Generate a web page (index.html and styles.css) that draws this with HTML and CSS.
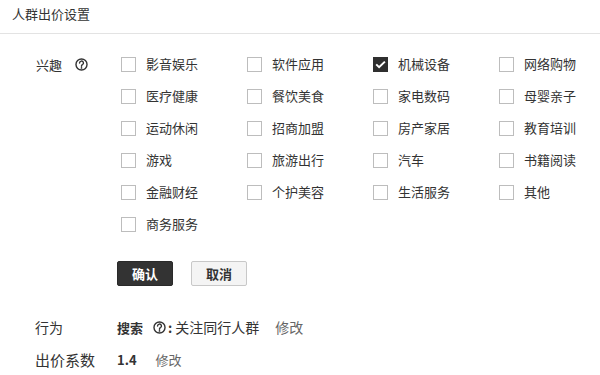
FILE: index.html
```html
<!DOCTYPE html>
<html lang="zh-CN">
<head>
<meta charset="utf-8">
<title>人群出价设置</title>
<link rel="stylesheet" href="styles.css">
</head>
<body>
<div class="header">人群出价设置</div>

<div class="interest">
  <div class="label">兴趣 <svg class="help" viewBox="0 0 12 12"><circle cx="6" cy="6" r="5.1" fill="none" stroke="#333" stroke-width="1.3"/><path d="M4.2 4.7a1.8 1.8 0 1 1 2.7 1.5c-.6.3-.9.6-.9 1.2v.3" fill="none" stroke="#333" stroke-width="1.3" stroke-linecap="round"/><circle cx="6" cy="9.2" r=".8" fill="#333"/></svg></div>
  <div class="grid">
    <label class="opt"><span class="box"></span>影音娱乐</label>
    <label class="opt"><span class="box"></span>软件应用</label>
    <label class="opt"><span class="box checked"><svg viewBox="0 0 13 13"><path d="M2.2 6.4l2.9 2.8 5.8-5.6" fill="none" stroke="#fff" stroke-width="2"/></svg></span>机械设备</label>
    <label class="opt"><span class="box"></span>网络购物</label>
    <label class="opt"><span class="box"></span>医疗健康</label>
    <label class="opt"><span class="box"></span>餐饮美食</label>
    <label class="opt"><span class="box"></span>家电数码</label>
    <label class="opt"><span class="box"></span>母婴亲子</label>
    <label class="opt"><span class="box"></span>运动休闲</label>
    <label class="opt"><span class="box"></span>招商加盟</label>
    <label class="opt"><span class="box"></span>房产家居</label>
    <label class="opt"><span class="box"></span>教育培训</label>
    <label class="opt"><span class="box"></span>游戏</label>
    <label class="opt"><span class="box"></span>旅游出行</label>
    <label class="opt"><span class="box"></span>汽车</label>
    <label class="opt"><span class="box"></span>书籍阅读</label>
    <label class="opt"><span class="box"></span>金融财经</label>
    <label class="opt"><span class="box"></span>个护美容</label>
    <label class="opt"><span class="box"></span>生活服务</label>
    <label class="opt"><span class="box"></span>其他</label>
    <label class="opt"><span class="box"></span>商务服务</label>
  </div>
</div>

<div class="actions">
  <button class="btn btn-primary">确认</button>
  <button class="btn btn-default">取消</button>
</div>

<div class="info info-first">
  <div class="info-label">行为</div>
  <div class="info-value">
    <b class="strong">搜索</b>
    <svg class="help help-inline" viewBox="0 0 12 12"><circle cx="6" cy="6" r="5.1" fill="none" stroke="#333" stroke-width="1.3"/><path d="M4.2 4.7a1.8 1.8 0 1 1 2.7 1.5c-.6.3-.9.6-.9 1.2v.3" fill="none" stroke="#333" stroke-width="1.3" stroke-linecap="round"/><circle cx="6" cy="9.2" r=".8" fill="#333"/></svg><b class="colon">:</b>
    <span class="desc">关注同行人群</span>
    <a class="edit">修改</a>
  </div>
</div>
<div class="info">
  <div class="info-label info-label-lg">出价系数</div>
  <div class="info-value">
    <b class="strong num">1.4</b>
    <a class="edit edit-sm">修改</a>
  </div>
</div>
</body>
</html>
```

FILE: styles.css
```css
body {
  margin: 0;
  font-family: "Noto Sans CJK SC", "Liberation Sans", sans-serif;
  color: #333;
  background: #fff;
}

.header {
  height: 34px;
  box-sizing: border-box;
  padding: 6px 12px 0;
  line-height: 16px;
  font-size: 13px;
  border-bottom: 1px solid #e3e3e3;
}

.interest {
  display: flex;
  margin-top: 14px;
  padding-left: 36px;
}

.label {
  width: 85px;
  height: 32px;
  display: flex;
  align-items: center;
  font-size: 13px;
  flex-shrink: 0;
}

.help {
  width: 13px;
  height: 13px;
  margin-left: 13px;
}

.grid {
  display: grid;
  grid-template-columns: repeat(4, 126px);
  grid-auto-rows: 32px;
}

.opt {
  display: flex;
  align-items: center;
  gap: 10px;
  font-size: 13px;
  line-height: 16px;
}

.box {
  width: 15px;
  height: 15px;
  box-sizing: border-box;
  border: 1px solid #bdbdbd;
  background: #fff;
  display: flex;
  flex-shrink: 0;
}

.box.checked {
  background: #2f2f2f;
  border-color: #2f2f2f;
}

.box svg {
  width: 13px;
  height: 13px;
}

.actions {
  display: flex;
  gap: 18px;
  margin-top: 21px;
  padding-left: 117px;
}

.btn {
  width: 56px;
  height: 25px;
  box-sizing: border-box;
  font-family: inherit;
  font-size: 13px;
  font-weight: bold;
  border-radius: 2px;
  padding: 0;
  line-height: 23px;
}

.btn-primary {
  background: #333;
  border: 1px solid #2a2a2a;
  color: #fff;
}

.btn-default {
  background: #f4f4f4;
  border: 1px solid #c8c8c8;
  color: #333;
}

.info {
  display: flex;
  align-items: center;
  height: 32px;
  padding-left: 35px;
}

.info-first {
  margin-top: 25px;
}

.info-label {
  width: 82px;
  font-size: 14px;
}

.info-label-lg {
  font-size: 15px;
}

.info-value {
  display: flex;
  align-items: center;
  font-size: 13px;
}

.strong {
  font-weight: bold;
}

.help-inline {
  margin-left: 10px;
}

.colon {
  margin: 0 3px 0 2px;
}

.desc {
  font-size: 14px;
}

.edit {
  color: #666;
  font-size: 14px;
  margin-left: 16px;
}

.edit-sm {
  font-size: 13px;
  margin-left: 19px;
}
```
